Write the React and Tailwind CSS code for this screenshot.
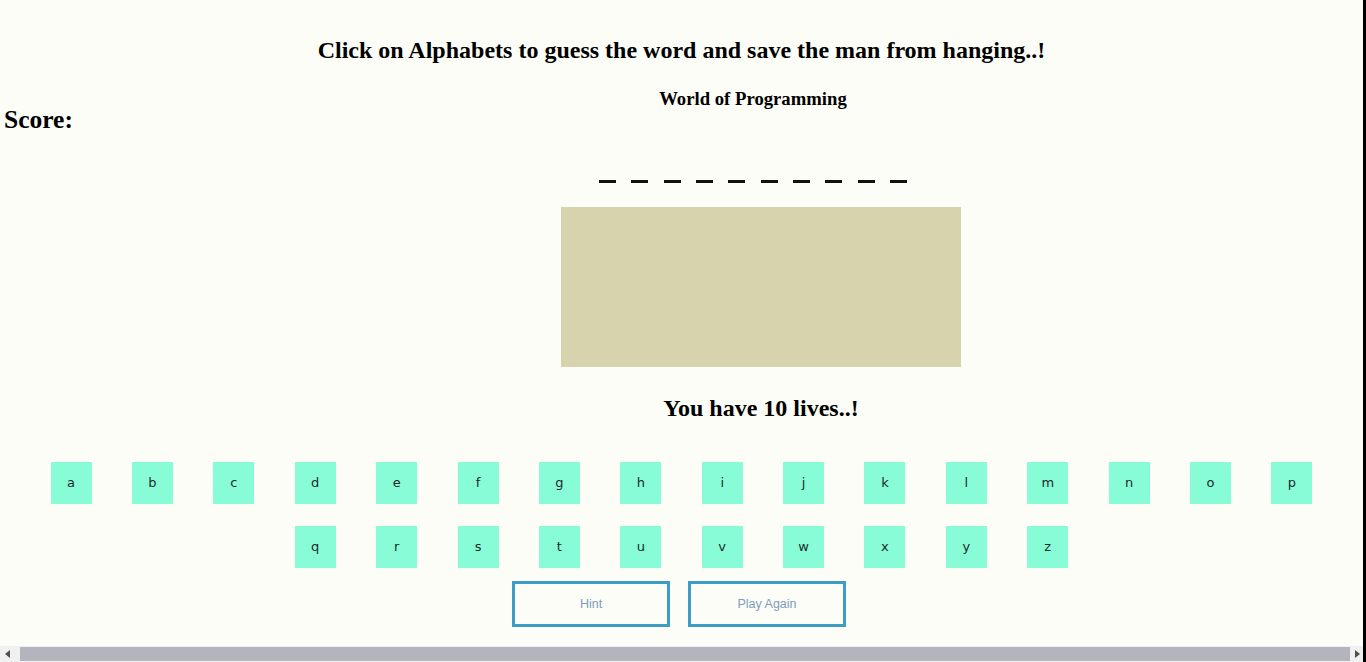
import React from "react";

const letters1 = "abcdefghijklmnop".split("");
const letters2 = "qrstuvwxyz".split("");

function Letter({ ch }) {
  return (
    <div className="w-[81.4px] flex justify-center">
      <div className="w-[41px] h-[42px] bg-[#88fcd6] flex items-center justify-center text-[13px] text-[#1c2a2a] font-['DejaVu_Sans',sans-serif]">
        {ch}
      </div>
    </div>
  );
}

export default function App() {
  return (
    <div className="w-[1366px] h-[662px] flex flex-col bg-[#fdfdf7] border-r-[3px] border-black overflow-hidden font-['Liberation_Serif',serif] text-black">
      <div className="flex-1 flex flex-col">
        <h2 className="pt-[36px] text-center text-[24px] leading-[28px] font-bold">
          Click on Alphabets to guess the word and save the man from hanging..!
        </h2>
        <div className="flex items-start">
          <div className="w-[143px] pl-[4px] pt-[41px] text-[25.5px] leading-[30px] font-bold">Score:</div>
          <div className="flex-1 flex flex-col items-center">
            <div className="pt-[24px] text-[18.7px] leading-[22px] font-bold">World of Programming</div>
            <div className="mt-[70px] flex gap-[15.4px]">
              {Array.from({ length: 10 }).map((_, i) => (
                <div key={i} className="w-[17px] h-[3px] bg-[#111]" />
              ))}
            </div>
          </div>
        </div>
        <div className="flex justify-center pl-[159px] mt-[24px]">
          <div className="w-[400px] h-[160px] bg-[#d6d3ad]" />
        </div>
        <div className="flex justify-center pl-[159px] mt-[27px] text-[24px] leading-[28px] font-bold">
          You have 10 lives..!
        </div>
        <div className="mt-[40px] px-[30px] flex flex-col gap-[22px]">
          <div className="flex justify-center">
            {letters1.map((c) => (
              <Letter key={c} ch={c} />
            ))}
          </div>
          <div className="flex justify-center">
            {letters2.map((c) => (
              <Letter key={c} ch={c} />
            ))}
          </div>
        </div>
        <div className="mt-[13px] flex justify-center gap-[18px] pr-[5px] font-['Liberation_Sans',sans-serif]">
          <button className="w-[158px] h-[46px] border-[3px] border-[#3f9cc4] text-[12.5px] text-[#7c9cbc] bg-transparent">
            Hint
          </button>
          <button className="w-[158px] h-[46px] border-[3px] border-[#3f9cc4] text-[12.5px] text-[#7c9cbc] bg-transparent">
            Play Again
          </button>
        </div>
      </div>
      <div className="h-[16px] flex items-stretch bg-[#f0f0f0]">
        <div className="w-[16px] flex items-center justify-center">
          <svg width="6" height="8" viewBox="0 0 6 8"><path d="M5 0 L0 4 L5 8 Z" fill="#505050" /></svg>
        </div>
        <div className="flex-1 my-[1px] ml-[4px] bg-[#b4b4bc]" />
        <div className="w-[13px] flex items-center justify-center">
          <svg width="6" height="8" viewBox="0 0 6 8"><path d="M1 0 L6 4 L1 8 Z" fill="#505050" /></svg>
        </div>
      </div>
    </div>
  );
}
